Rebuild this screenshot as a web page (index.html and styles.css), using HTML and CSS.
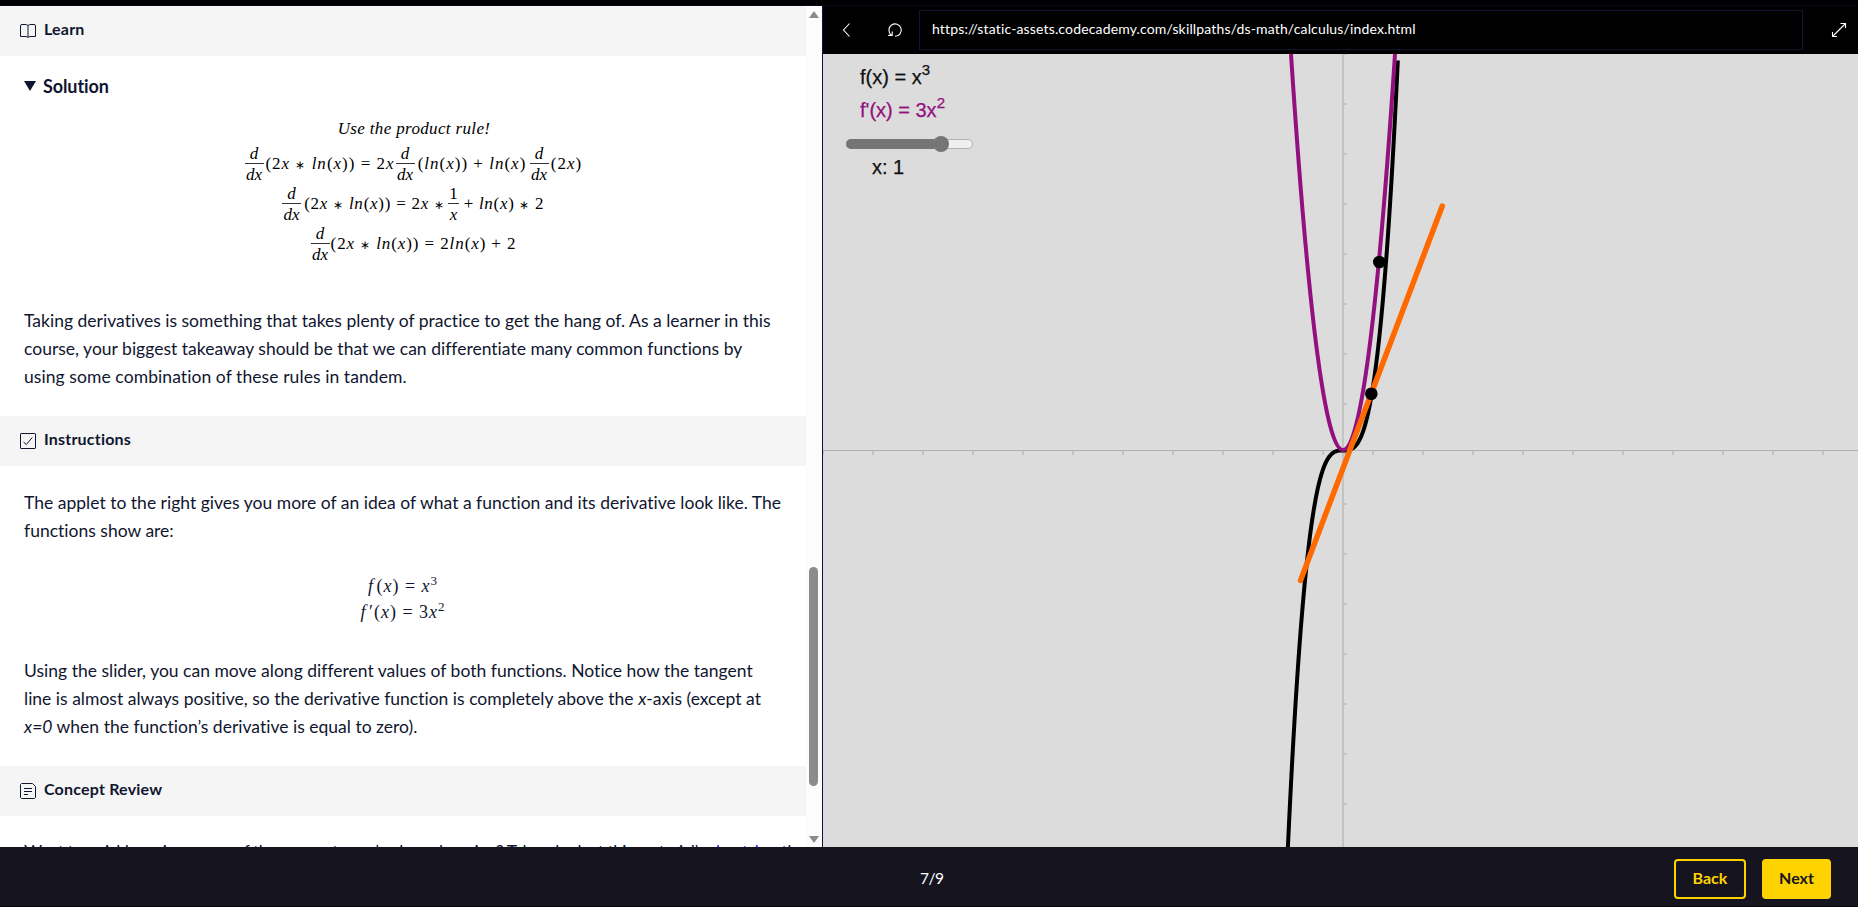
FILE: index.html
```html
<!DOCTYPE html>
<html lang="en">
<head>
<meta charset="utf-8">
<title>Calculus</title>
<link rel="stylesheet" href="styles.css">
</head>
<body>
<div class="app">
  <div class="topbar"></div>
  <main class="workspace">
    <section class="lesson">
      <div class="content">
        <header class="section-head">
          <svg class="icon" viewBox="0 0 16 16"><path d="M8 2.500Q7 1.500 5 1.500H2Q.5 1.500 .5 3V13.500H5Q7.300 13.500 8 14.500Q8.700 13.500 11 13.500H15.500V3Q15.500 1.500 14 1.500H11Q9 1.500 8 2.500V14"/></svg>
          <h2>Learn</h2>
        </header>
        <div class="solution">
          <h3 class="summary"><svg class="triangle" viewBox="0 0 12 10"><path d="M0 0H12L6 10Z"/></svg><span>Solution</span></h3>
          <div class="math">
            <div class="math-row math-note"><i>Use the product rule!</i></div>
            <div class="math-row tall"><span class="frac"><i>d</i><i>dx</i></span><span class="seg s1">(2<i>x</i> <b>∗</b> <i>ln</i>(<i>x</i>)) = 2<i>x</i></span><span class="frac"><i>d</i><i>dx</i></span><span class="seg s2">(<i>ln</i>(<i>x</i>)) + <i>ln</i>(<i>x</i>)</span><span class="frac"><i>d</i><i>dx</i></span><span class="seg s3">(2<i>x</i>)</span></div>
            <div class="math-row tall"><span class="frac"><i>d</i><i>dx</i></span><span class="seg s4">(2<i>x</i> <b>∗</b> <i>ln</i>(<i>x</i>)) = 2<i>x</i> <b>∗</b></span><span class="frac small"><span>1</span><i>x</i></span><span class="seg s5">+ <i>ln</i>(<i>x</i>) <b>∗</b> 2</span></div>
            <div class="math-row tall"><span class="frac"><i>d</i><i>dx</i></span><span class="seg s6">(2<i>x</i> <b>∗</b> <i>ln</i>(<i>x</i>)) = 2<i>ln</i>(<i>x</i>) + 2</span></div>
          </div>
          <p>Taking derivatives is something that takes plenty of practice to get the hang of. As a learner in this<br>course, your biggest takeaway should be that we can differentiate many common functions by<br><span class="wide">using some combination of these rules in tandem.</span></p>
        </div>
        <header class="section-head">
          <svg class="icon" viewBox="0 0 16 16"><rect x=".5" y=".5" width="15" height="15" rx=".6"/><path d="M3.500 9L6.300 11.500L12.300 4.500"/></svg>
          <h2>Instructions</h2>
        </header>
        <div class="instructions">
          <p>The applet to the right gives you more of an idea of what a function and its derivative look like. The<br>functions show are:</p>
          <div class="math display">
            <div class="math-row"><span><i>f</i>&#8202;(<i>x</i>) = <i>x</i><sup>3</sup></span></div>
            <div class="math-row"><span><i>f</i>&#8202;′(<i>x</i>) = 3<i>x</i><sup>2</sup></span></div>
          </div>
          <p>Using the slider, you can move along different values of both functions. Notice how the tangent<br>line is almost always positive, so the derivative function is completely above the <i>x</i>-axis (except at<br><i>x=0</i> when the function’s derivative is equal to zero).</p>
        </div>
        <header class="section-head">
          <svg class="icon" viewBox="0 0 16 16"><path d="M1.500 .500H12.500L15.500 3.500V14.500L14.500 15.500H1.500L.500 14.500V1.500ZM4 5.500H12M4 8.500H12M4 11.500H8"/></svg>
          <h2>Concept Review</h2>
        </header>
        <p class="review">Want to quickly review some of the concepts you’ve been learning? Take a look at this material’s <span class="link">cheatsheet</span>!</p>
      </div>
      <div class="scrollbar">
        <svg class="arrow" viewBox="0 0 10 7"><path d="M5 0L10 7H0Z"/></svg>
        <div class="thumb"></div>
        <svg class="arrow" viewBox="0 0 10 7"><path d="M0 0H10L5 7Z"/></svg>
      </div>
    </section>
    <section class="browser">
      <div class="toolbar">
        <svg class="nav-icon back" viewBox="0 0 16 16"><path d="M10.500 1.500L4.500 8L10.500 14.500"/></svg>
        <svg class="nav-icon reload" viewBox="0 0 16 16"><path d="M8 14.300A6.200 6.200 0 1 0 4.300 13M1.200 13.400H5.200V9.600"/></svg>
        <div class="url"><span>https://static-assets.codecademy.com/skillpaths/ds-math/calculus/index.html</span></div>
        <svg class="nav-icon expand" viewBox="0 0 16 16"><path d="M2 14L14 2M9.500 1.500H14.500V6M1.500 10V14.500H6"/></svg>
      </div>
      <div class="applet">
        <svg class="plot" viewBox="0 0 1035 793">
          <defs>
            <pattern id="xticks" width="50" height="6" patternUnits="userSpaceOnUse" x="-25" y="396"><path d="M25 0V5" stroke="#c3c3c3" stroke-width="2"/></pattern>
            <pattern id="yticks" width="6" height="50" patternUnits="userSpaceOnUse" x="519" y="-25"><path d="M0 25H5" stroke="#c3c3c3" stroke-width="2"/></pattern>
          </defs>
          <rect x="0" y="396" width="1035" height="6" fill="url(#xticks)"/>
          <rect x="519" y="0" width="6" height="793" fill="url(#yticks)"/>
          <path d="M520 0V793" stroke="#c3c3c3" stroke-width="2"/>
          <path d="M0 396.500H1035" stroke="#b0b0b0"/>
          <path class="curve cubic" d=""/>
          <path class="curve square" d="M468 0Q520 792 572 0"/>
          <path class="tangent" d="M477.500 526.500L619.300 152"/>
          <circle cx="548.300" cy="339.700" r="6.300"/>
          <circle cx="556.300" cy="208" r="6.300"/>
        </svg>
        <div class="legend">
          <div class="fn">f(x) = x<sup>3</sup></div>
          <div class="fn derivative">f'(x) = 3x<sup>2</sup></div>
          <div class="slider"><div class="fill"></div><div class="knob"></div></div>
          <div class="value">x: 1</div>
        </div>
      </div>
    </section>
  </main>
  <footer class="footer">
    <span class="progress">7/9</span>
    <div class="actions"><button class="btn outline">Back</button><button class="btn solid">Next</button></div>
  </footer>
</div>
<script src="plot.js"></script>
</body>
</html>
```
FILE: plot.js
```js
// Sample y = k * x^3 around the origin of the plot.
const ORIGIN = { x: 520, y: 396.5 };
const K = 0.00237;
const points = [];
for (let dx = -56; dx <= 54.9; dx += 0.4) {
  points.push((ORIGIN.x + dx).toFixed(2) + ' ' + (ORIGIN.y - K * dx ** 3).toFixed(2));
}
document.querySelector('.cubic').setAttribute('d', 'M' + points.join('L'));
```
FILE: styles.css
```css
* { box-sizing: border-box; }
body { margin: 0; background: #15141f; font-family: Lato, sans-serif; font-variant-ligatures: none; color: #10162f; }
h2, h3, p { margin: 0; }
.app { width: 1858px; height: 907px; display: flex; flex-direction: column; overflow: hidden; }
.topbar { height: 6px; flex: none; background: #000; border-bottom: 1px solid #080a18; }
.workspace { display: flex; height: 841px; flex: none; }

.lesson { width: 823px; flex: none; display: flex; background: #fff; border-right: 1px solid #10162f; overflow: hidden; }
.content { width: 806px; flex: none; overflow: hidden; height: 841px; }
.section-head { height: 50px; display: flex; align-items: center; gap: 8px; padding-left: 20px; background: #f5f5f5; }
.section-head h2 { font-size: 16px; line-height: 24px; font-weight: 700; padding-bottom: 4px; letter-spacing: .2px; }
.icon { width: 16px; height: 16px; fill: none; stroke: #10162f; stroke-width: 1; }
.solution { height: 360px; padding: 16px 24px 0; }
.summary { display: flex; align-items: center; gap: 7px; height: 28px; font-size: 18px; font-weight: 700; }
.summary span { letter-spacing: -.1px; }
.triangle { width: 12px; height: 10px; fill: #10162f; }
.content p { font-size: 17.5px; line-height: 28px; white-space: nowrap; letter-spacing: .01px; }
.content .wide { letter-spacing: .08px; }
.link { color: #3a10e5; }

.math { font-family: "Liberation Serif", serif; font-size: 17px; color: #000; display: flex; flex-direction: column; align-items: center; height: 207px; padding: 15px 0 0 22px; white-space: nowrap; }
.math-row { display: flex; align-items: center; justify-content: center; height: 26px; }
.math-note { letter-spacing: .35px; height: 29px; padding-bottom: 2px; }
.math-row.tall { height: 40px; }
.math b { font-size: 12px; font-weight: 400; }
.frac { width: 19px; height: 40px; display: flex; flex-direction: column; align-items: center; line-height: 19px; }
.frac > :first-child { width: 100%; text-align: center; border-bottom: 1px solid #333; height: 20px; }
.frac > :last-child { height: 20px; line-height: 22px; }
.frac.small { width: 11px; }
.seg { text-align: center; letter-spacing: 1px; }
.s1 { width: 132px; padding-left: 1px; }
.s2 { width: 115px; }
.s3 { width: 35px; padding-left: 1px; }
.s4 { width: 147px; letter-spacing: .75px; }
.s5 { width: 87px; letter-spacing: .7px; padding-left: 3px; }
.s6 { width: 188px; letter-spacing: .9px; }
.instructions { height: 300px; padding: 23px 24px 0; }
.display { color: #10162f; height: 112px; padding: 28px 0 0; font-size: 18px; }
.display .math-row { height: 26px; letter-spacing: 1px; }
.math sup { font-size: 13px; line-height: 0; vertical-align: 7px; }
.content .review { padding: 22px 24px 0; letter-spacing: -.55px; }

.scrollbar { width: 16px; background: #fcfcfc; display: flex; flex-direction: column; align-items: center; padding: 5px 1px 4px 0; }
.arrow { width: 10px; height: 7px; fill: #8b8b8b; flex: none; }
.thumb { width: 9px; height: 219px; margin: 549px 0 auto; border-radius: 5px; background: #8b8b8b; flex: none; }

.browser { flex: 1; display: flex; flex-direction: column; }
.toolbar { height: 48px; flex: none; background: #000; display: flex; align-items: center; padding-left: 16px; }
.nav-icon { width: 16px; height: 16px; fill: none; stroke: #fff; stroke-width: 1.1; }
.reload { margin: 0 16px 0 32px; }
.url { width: 884px; height: 40px; border: 1px solid #10162f; color: #fff; font-size: 14px; line-height: 36px; padding-left: 12px; white-space: nowrap; letter-spacing: .15px; }
.expand { margin-left: 28px; }
.applet { height: 793px; background: #dcdcdc; position: relative; overflow: hidden; }
.plot { display: block; width: 1035px; height: 793px; }
.curve { fill: none; stroke-width: 4; stroke-linejoin: round; }
.cubic { stroke: #000; }
.square { stroke: #93117e; }
.tangent { stroke: #ff6a00; stroke-width: 5.5; stroke-linecap: round; }
.legend { position: absolute; left: 23px; top: 7px; width: 130px; font-family: "Liberation Sans", Arial, sans-serif; font-size: 20px; color: #111; }
.fn { height: 33px; line-height: 33px; padding-left: 14px; white-space: nowrap; -webkit-text-stroke: .25px currentColor; }
.fn sup { font-size: 15px; line-height: 0; vertical-align: 9px; }
.derivative { color: #93117e; }
.slider { width: 127px; height: 10px; margin-top: 12px; border: 1px solid #b2b2b2; border-radius: 5px; background: #efefef; display: flex; align-items: center; }
.fill { width: 88px; height: 10px; margin-left: -1px; border-radius: 5px 0 0 5px; background: #757575; flex: none; }
.knob { width: 16px; height: 16px; margin-left: -1px; border-radius: 50%; background: #757575; flex: none; }
.value { padding-left: 26px; line-height: 36px; -webkit-text-stroke: .25px currentColor; }

.footer { height: 60px; flex: none; background: #15141f; border-bottom: 1px solid #080810; display: flex; align-items: center; justify-content: space-between; padding: 4px 27px 0 920px; color: #fff; }
.progress { font-size: 15.5px; padding-bottom: 2px; letter-spacing: -.5px; }
.actions { display: flex; gap: 16px; }
.btn { height: 40px; border: 2px solid #ffd300; border-radius: 4px; font: 700 16px Lato, sans-serif; padding: 0 0 2px; }
.outline { width: 72px; background: transparent; color: #ffd300; }
.solid { width: 69px; background: #ffd300; color: #15141f; }
```
